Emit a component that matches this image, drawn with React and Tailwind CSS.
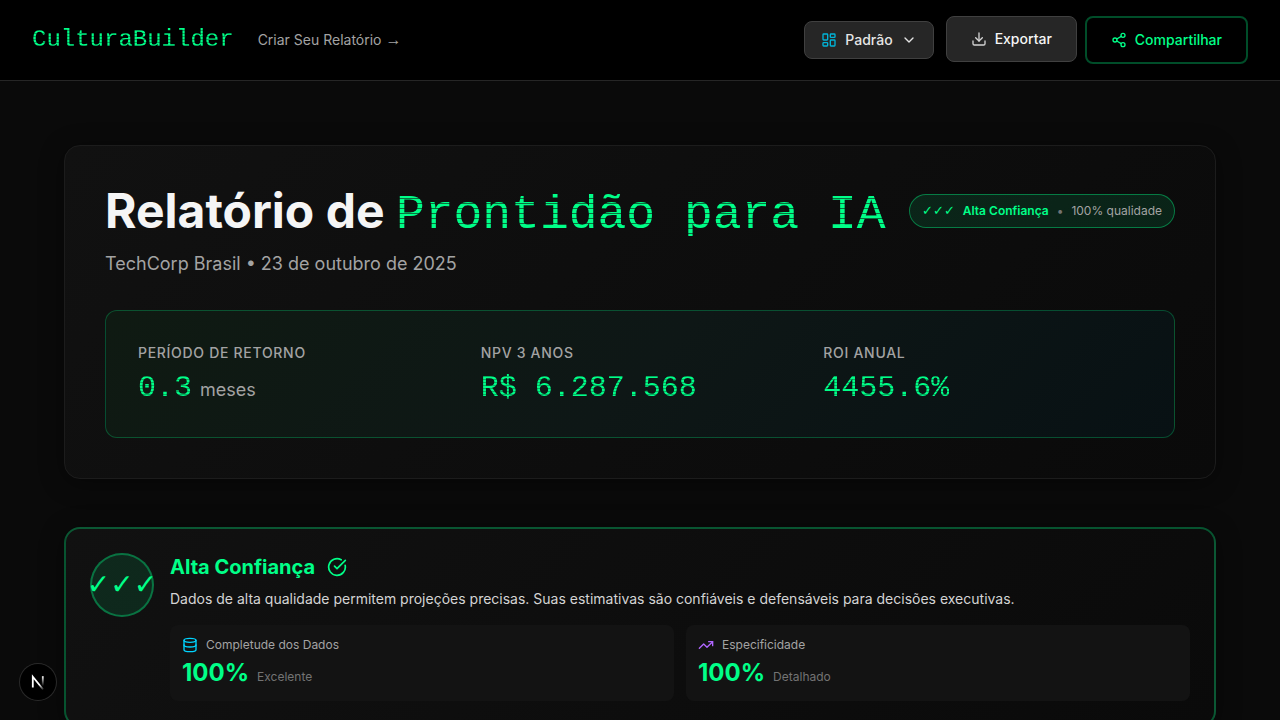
import {
  LayoutDashboard,
  ChevronDown,
  Download,
  Share2,
  CircleCheckBig,
  Database,
  TrendingUp,
} from "lucide-react";

const DOTS_LG = "[mask-image:repeating-linear-gradient(to_bottom,#000_0_4px,#0006_4px_5px)]";
const DOTS_SM =
  "[mask-image:repeating-linear-gradient(to_bottom,#000_0_2px,#000a_2px_3px)]";

const METRICS = [
  { label: "Período de Retorno", value: "0.3", unit: "meses" },
  { label: "NPV 3 Anos", value: "R$ 6.287.568" },
  { label: "ROI Anual", value: "4455.6%" },
];

const QUALITY = [
  { label: "Completude dos Dados", value: "100%", note: "Excelente", icon: Database, tone: "text-[#00d4ff]" },
  { label: "Especificidade", value: "100%", note: "Detalhado", icon: TrendingUp, tone: "text-[#b066ff]" },
];

function Header() {
  return (
    <header className="border-b border-[#262626] bg-black">
      <div className="flex items-center justify-between px-8 py-4">
        <div className="flex items-center gap-6">
          <a href="#" className={`font-['Liberation_Mono',monospace] text-2xl leading-9 text-[#00ff88] ${DOTS_SM}`}>
            CulturaBuilder
          </a>
          <a href="#" className="text-sm text-[#a3a3a3]">
            Criar Seu Relatório <span className="font-['Liberation_Sans',sans-serif] text-base leading-5">→</span>
          </a>
        </div>
        <div className="flex items-center gap-3">
          <button className="flex items-center gap-2 rounded-lg border border-[#404040] bg-[#262626] px-4 py-2 text-sm font-medium text-[#e5e5e5]">
            <LayoutDashboard className="size-4 text-[#00b4d8]" />
            Padrão
            <ChevronDown className="size-4" />
          </button>
          <div className="flex items-start gap-2">
            <button className="flex items-center gap-2 rounded-lg border border-[#404040] bg-[#262626] px-6 py-3 text-sm font-medium text-[#f5f5f5]">
              <Download className="size-4 text-[#d4d4d4]" />
              Exportar
            </button>
            <button className="flex items-center gap-2 rounded-lg border-2 border-[#00ff88]/30 px-6 py-3 text-sm font-medium text-[#00ff88]">
              <Share2 className="size-4" />
              Compartilhar
            </button>
          </div>
        </div>
      </div>
    </header>
  );
}

function Metric({ label, value, unit }) {
  return (
    <div>
      <div className="text-sm font-medium uppercase tracking-wider text-[#a3a3a3]">{label}</div>
      <div className="mt-2 flex items-baseline gap-2">
        <span className={`font-['Liberation_Mono',monospace] text-[30px] leading-[34px] text-[#00ff88] ${DOTS_SM}`}>
          {value}
        </span>
        {unit && <span className="text-lg text-[#a3a3a3]">{unit}</span>}
      </div>
    </div>
  );
}

function Hero() {
  return (
    <section className="rounded-2xl border border-[#1c1c1c] bg-linear-135 from-[#111111] to-[#0a0a0a] p-10 shadow-[0_4px_24px_rgba(0,0,0,0.4)]">
      <div className="flex items-center justify-between">
        <h1 className="text-5xl leading-[50px] font-bold text-[#f5f5f5]">
          Relatório de{" "}
          <span className={`inline-block font-['Liberation_Mono',monospace] leading-[42px] font-normal text-[#00ff88] ${DOTS_LG}`}>
            Prontidão para IA
          </span>
        </h1>
        <div className="flex shrink-0 items-center gap-2 rounded-full border border-[#00ff88]/40 bg-[#00ff88]/10 px-3 py-2 text-xs">
          <span className="font-['DejaVu_Sans',sans-serif] text-[13px] leading-4 font-bold text-[#00ff88]">✓✓✓</span>
          <span className="font-semibold text-[#00ff88]">Alta Confiança</span>
          <span className="text-[#737373]">•</span>
          <span className="text-[#a3a3a3]">100% qualidade</span>
        </div>
      </div>
      <p className="mt-3.5 text-lg text-[#a3a3a3]">TechCorp Brasil • 23 de outubro de 2025</p>
      <div className="mt-8 grid grid-cols-3 gap-6 rounded-xl border border-[#00ff88]/25 bg-linear-135 from-[#0f1a12] via-[#0e1716] to-[#081114] p-8">
        {METRICS.map((m) => (
          <Metric key={m.label} {...m} />
        ))}
      </div>
    </section>
  );
}

function Confidence() {
  return (
    <section className="mt-12 flex gap-4 rounded-2xl border-2 border-[#00ff88]/30 bg-linear-135 from-[#111111] to-[#0a0a0a] p-6 shadow-[0_4px_24px_rgba(0,0,0,0.4)]">
      <div className="flex size-16 shrink-0 items-center justify-center rounded-full border-2 border-[#00ff88]/35 bg-[#00ff88]/10 font-['DejaVu_Sans',sans-serif] text-[28px] font-bold text-[#00ff88]">
        ✓✓✓
      </div>
      <div className="min-w-0 flex-1">
        <div className="flex items-center gap-3">
          <h2 className="text-xl leading-7 font-bold text-[#00ff88]">Alta Confiança</h2>
          <CircleCheckBig className="size-5 text-[#00ff88]" />
        </div>
        <p className="mt-2 text-sm text-[#d4d4d4]">
          Dados de alta qualidade permitem projeções precisas. Suas estimativas são confiáveis e defensáveis para
          decisões executivas.
        </p>
        <div className="mt-4 grid grid-cols-2 gap-3">
          {QUALITY.map(({ label, value, note, icon: Icon, tone }) => (
            <div key={label} className="rounded-lg bg-[#131313] p-3">
              <div className="flex items-center gap-2 text-xs text-[#a3a3a3]">
                <Icon className={`size-4 ${tone}`} />
                {label}
              </div>
              <div className="mt-1 flex items-baseline gap-2">
                <span className="text-2xl leading-8 font-bold text-[#00ff88]">{value}</span>
                <span className="text-xs text-[#737373]">{note}</span>
              </div>
            </div>
          ))}
        </div>
      </div>
    </section>
  );
}

function DevBadge() {
  return (
    <button
      aria-label="Next.js"
      className="fixed bottom-5 left-5 flex size-9 items-center justify-center rounded-full bg-black shadow-[0_0_0_1px_#2a2a2a]"
    >
      <svg viewBox="0 0 36 36" className="size-9" fill="none">
        <defs>
          <linearGradient id="diag" x1="20" y1="20" x2="24.5" y2="25.5" gradientUnits="userSpaceOnUse">
            <stop stopColor="#fff" />
            <stop offset="1" stopColor="#fff" stopOpacity="0" />
          </linearGradient>
          <linearGradient id="stem" x1="23" y1="12" x2="23" y2="22" gradientUnits="userSpaceOnUse">
            <stop stopColor="#fff" />
            <stop offset="1" stopColor="#fff" stopOpacity="0" />
          </linearGradient>
        </defs>
        <path d="M12.8 23.5V12.8L23.2 25.5" stroke="url(#diag)" strokeWidth="1.8" />
        <path d="M22.8 12.2V22" stroke="url(#stem)" strokeWidth="1.8" />
      </svg>
    </button>
  );
}

export default function App() {
  return (
    <div className="min-h-screen bg-[#0a0a0a] font-[Inter,sans-serif] text-[#f5f5f5]">
      <Header />
      <main className="mx-auto max-w-7xl px-16 py-16">
        <Hero />
        <Confidence />
      </main>
      <DevBadge />
    </div>
  );
}
